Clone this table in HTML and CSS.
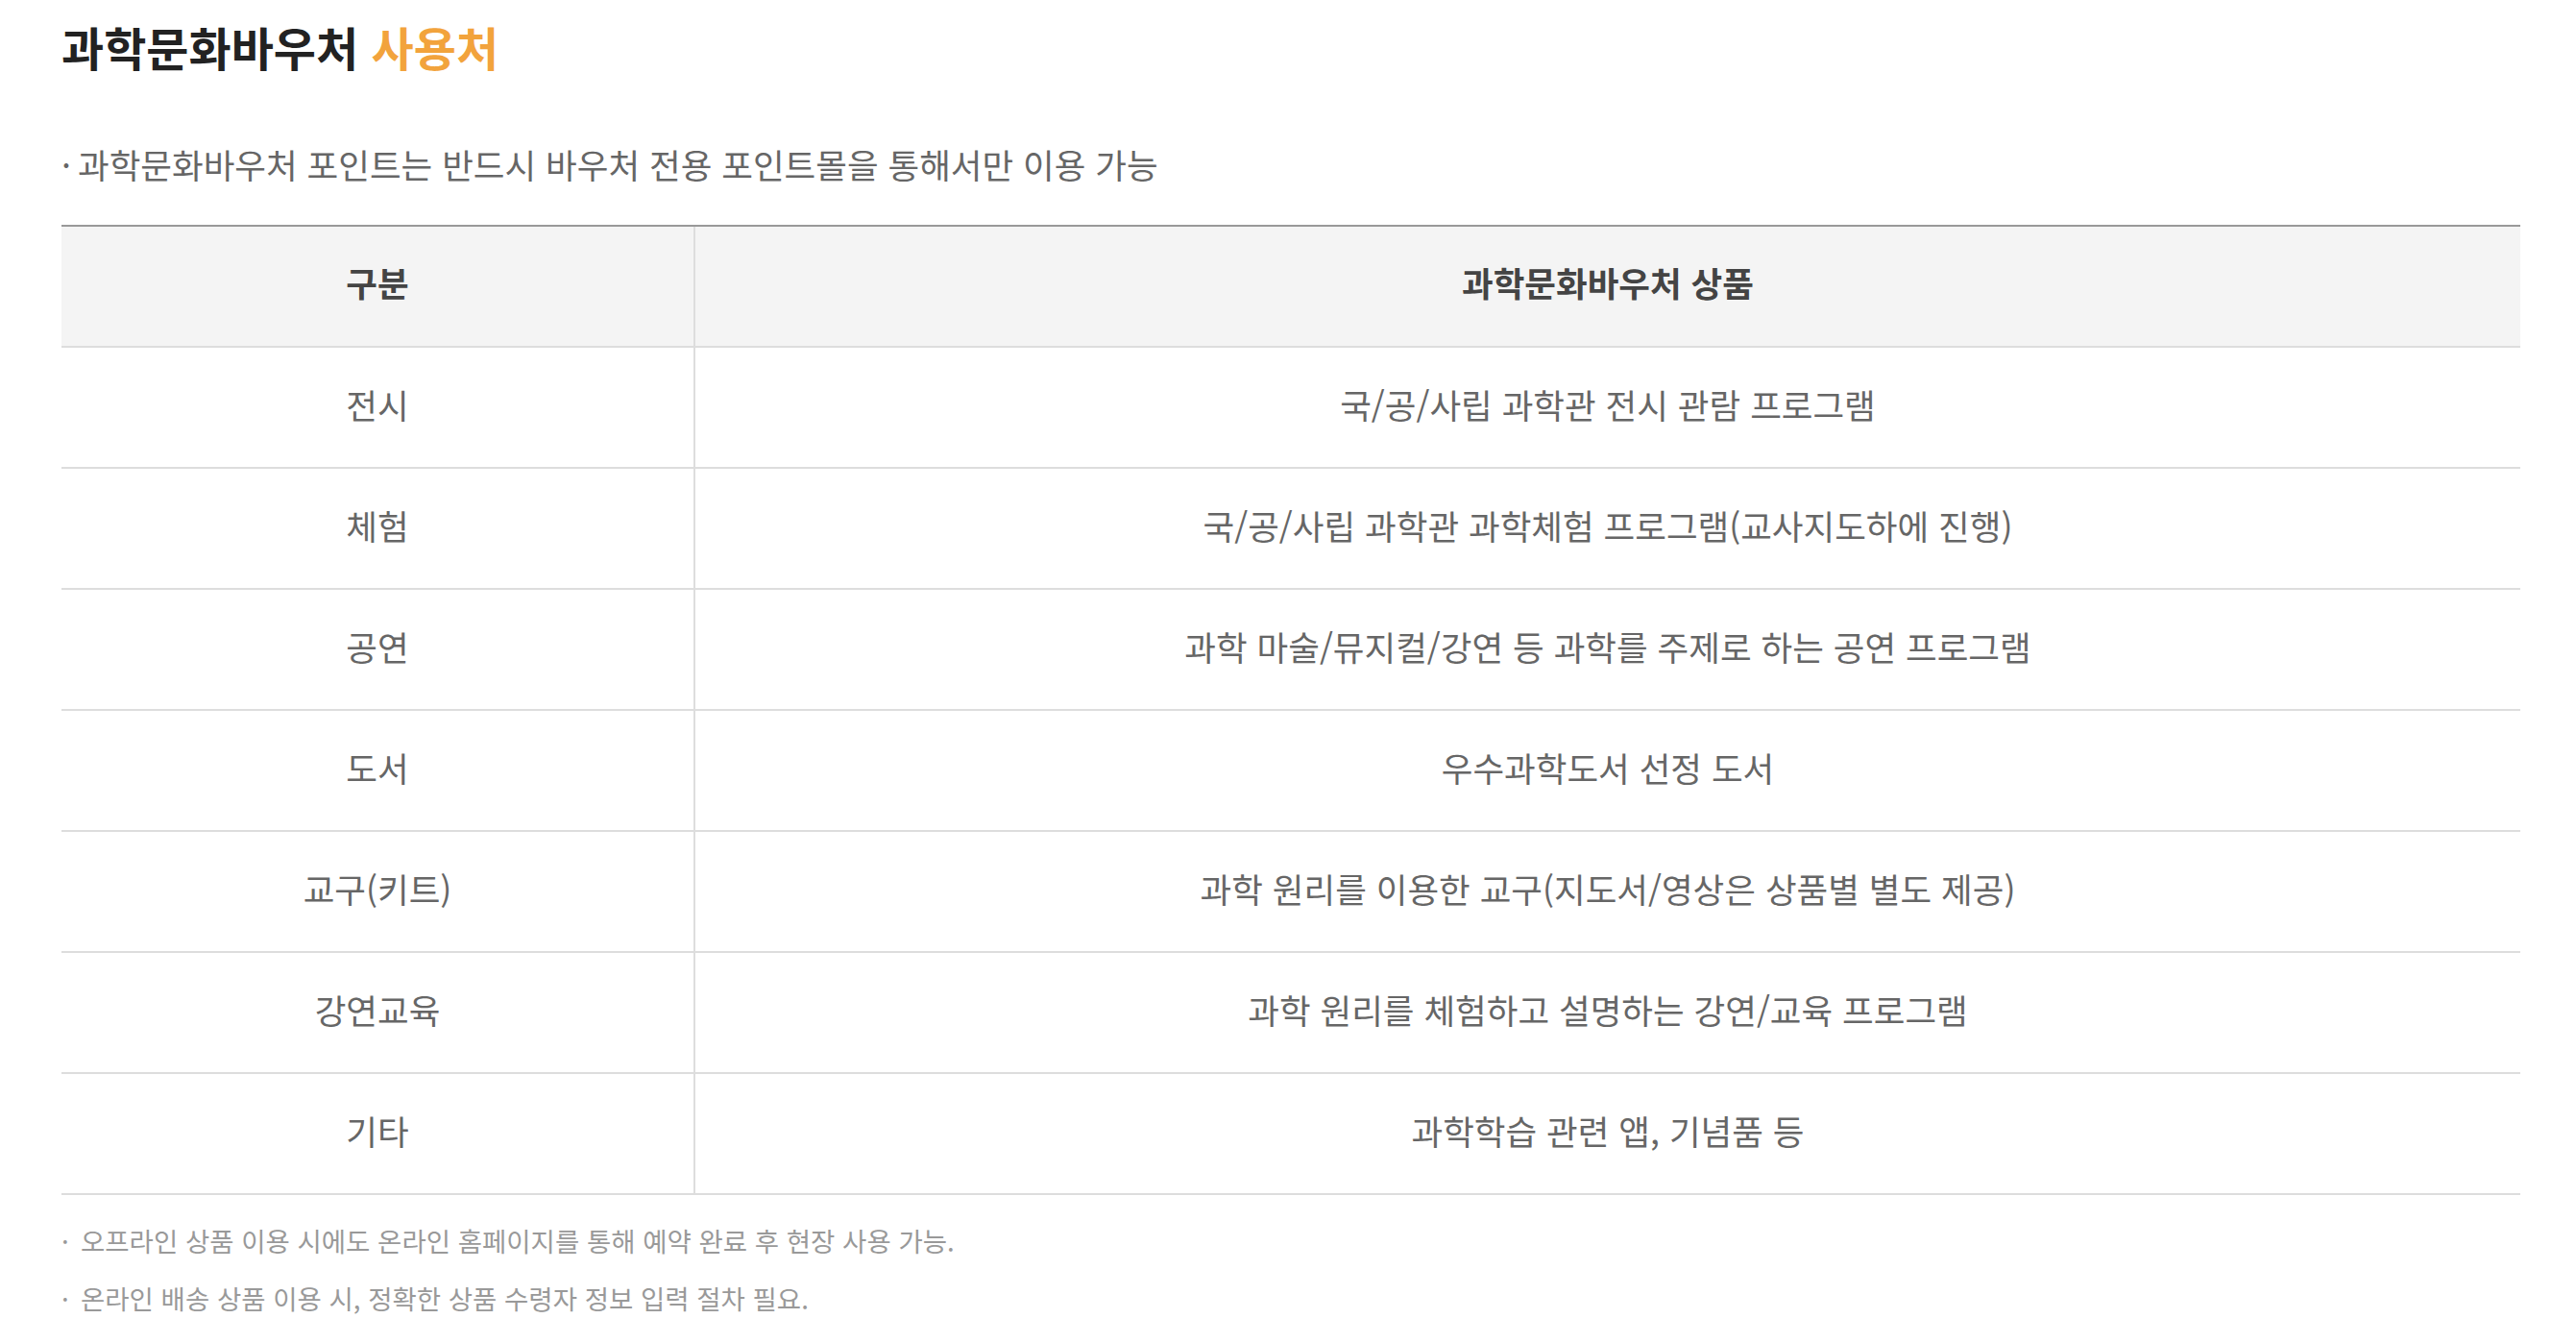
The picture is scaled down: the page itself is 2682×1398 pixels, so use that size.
FILE: index.html
```html
<!DOCTYPE html>
<html lang="ko">
<head>
<meta charset="utf-8">
<title>과학문화바우처 사용처</title>
<link rel="stylesheet" href="styles.css">
</head>
<body>
<div class="wrap">
  <h2 class="title">과학문화바우처 <span class="accent">사용처</span></h2>
  <p class="lead"><span class="dot">·</span>과학문화바우처 포인트는 반드시 바우처 전용 포인트몰을 통해서만 이용 가능</p>
  <table class="usage">
    <colgroup>
      <col class="c1">
      <col class="c2">
    </colgroup>
    <thead>
      <tr><th>구분</th><th>과학문화바우처 상품</th></tr>
    </thead>
    <tbody>
      <tr><td>전시</td><td>국/공/사립 과학관 전시 관람 프로그램</td></tr>
      <tr><td>체험</td><td>국/공/사립 과학관 과학체험 프로그램(교사지도하에 진행)</td></tr>
      <tr><td>공연</td><td>과학 마술/뮤지컬/강연 등 과학를 주제로 하는 공연 프로그램</td></tr>
      <tr><td>도서</td><td>우수과학도서 선정 도서</td></tr>
      <tr><td>교구(키트)</td><td>과학 원리를 이용한 교구(지도서/영상은 상품별 별도 제공)</td></tr>
      <tr><td>강연교육</td><td>과학 원리를 체험하고 설명하는 강연/교육 프로그램</td></tr>
      <tr><td>기타</td><td>과학학습 관련 앱, 기념품 등</td></tr>
    </tbody>
  </table>
  <ul class="notes">
    <li><span class="dot">·</span>오프라인 상품 이용 시에도 온라인 홈페이지를 통해 예약 완료 후 현장 사용 가능.</li>
    <li><span class="dot">·</span>온라인 배송 상품 이용 시, 정확한 상품 수령자 정보 입력 절차 필요.</li>
  </ul>
</div>
</body>
</html>
```
FILE: styles.css
```css
html, body {
  margin: 0;
  padding: 0;
  background: #fff;
}
body {
  font-family: "Noto Sans CJK KR", "Noto Sans", sans-serif;
  color: #666;
}
.wrap {
  margin-left: 64px;
  width: 2560px;
  padding-top: 18px;
}
.title {
  margin: 0;
  font-size: 48px;
  line-height: 60px;
  font-weight: 700;
  color: #222;
}
.accent {
  color: #f2a33c;
}
.lead {
  margin: 73px 0 43px;
  font-size: 35.5px;
  line-height: 40px;
  color: #666;
  display: flex;
  align-items: baseline;
}
.lead .dot {
  width: 17px;
  flex: none;
}
.usage {
  width: 100%;
  table-layout: fixed;
  border-collapse: separate;
  border-spacing: 0;
  border-top: 2px solid #999;
}
.c1 { width: 660px; }
.usage tr {
  height: 126px;
}
.usage th,
.usage td {
  padding: 0 0 7px;
  text-align: center;
  vertical-align: middle;
  border-bottom: 2px solid #ddd;
  font-size: 35.5px;
}
.usage th:first-child,
.usage td:first-child {
  border-right: 2px solid #ddd;
}
.usage th {
  background: #f4f4f4;
  font-weight: 700;
  color: #444;
  padding-bottom: 10px;
}
.usage td {
  color: #666;
}
.notes {
  list-style: none;
  margin: 29px 0 0;
  padding: 0;
}
.notes li {
  font-size: 27.5px;
  line-height: 36px;
  color: #999;
  margin-bottom: 24px;
  display: flex;
  align-items: baseline;
}
.notes .dot {
  width: 20px;
  flex: none;
}
```
